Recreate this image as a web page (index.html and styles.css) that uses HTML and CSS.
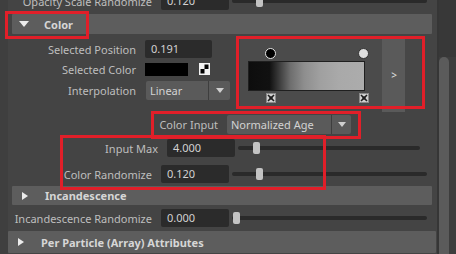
FILE: index.html
```html
<!DOCTYPE html>
<html>
<head>
<meta charset="utf-8">
<link rel="stylesheet" href="styles.css">
</head>
<body>
<div class="app">
  <div class="main">
    <div class="row row-top">
      <span class="lbl w152">Opacity Scale Randomize</span>
      <span class="field f68">0.120</span>
      <div class="slider s195"><span class="thumb" style="left:24px"></span></div>
    </div>

    <div class="frame-head sub"><span class="tri-down"></span><span class="head-text">Color</span></div>

    <div class="color-top">
      <div class="color-rows">
        <div class="row row-sp">
          <span class="lbl w136">Selected Position</span>
          <span class="field f67">0.191</span>
        </div>
        <div class="row row-sc">
          <span class="lbl w136">Selected Color</span>
          <span class="swatch"></span>
          <svg class="checker" width="11" height="12" viewBox="0 0 11 12"><rect x="0" y="0" width="11" height="12" fill="#f2f2f2"/><rect x="5.5" y="1.5" width="4" height="4.5" fill="#000"/><rect x="1.5" y="6" width="4" height="4.5" fill="#000"/></svg>
        </div>
        <div class="row row-ip">
          <span class="lbl w136">Interpolation</span>
          <div class="dropdown dd-interp">
            <span class="dd-text">Linear</span>
            <span class="dd-btn"><span class="dd-arrow"></span></span>
          </div>
        </div>
      </div>
      <div class="ramp">
        <div class="ramp-panel">
          <span class="marker m-black" style="left:25px"></span>
          <span class="marker m-white" style="left:118px"></span>
          <div class="ramp-grad"></div>
          <svg class="ramp-icon" style="left:26px" width="10" height="10" viewBox="0 0 10 10"><rect x="0.5" y="0.5" width="9" height="9" fill="#cfcfcf" stroke="#8a8a8a"/><path d="M2 2 L8 8 M8 2 L2 8" stroke="#1e1e1e" stroke-width="1.6"/><rect x="3.5" y="3.5" width="3" height="3" fill="#1e1e1e"/></svg>
          <svg class="ramp-icon" style="left:119px" width="10" height="10" viewBox="0 0 10 10"><rect x="0.5" y="0.5" width="9" height="9" fill="#cfcfcf" stroke="#8a8a8a"/><path d="M2 2 L8 8 M8 2 L2 8" stroke="#1e1e1e" stroke-width="1.6"/><rect x="3.5" y="3.5" width="3" height="3" fill="#1e1e1e"/></svg>
        </div>
        <div class="ramp-strip">&gt;</div>
        <div class="ramp-side"></div>
      </div>
    </div>

    <div class="row row-ci">
      <span class="lbl w218">Color Input</span>
      <div class="dropdown dd-input">
        <span class="dd-text">Normalized Age</span>
        <span class="dd-btn"><span class="dd-arrow"></span></span>
      </div>
    </div>

    <div class="row row-im">
      <span class="lbl w158">Input Max</span>
      <span class="field f68">4.000</span>
      <div class="slider s182"><span class="thumb" style="left:15px"></span></div>
    </div>

    <div class="row row-cr">
      <span class="lbl w152">Color Randomize</span>
      <span class="field f68">0.120</span>
      <div class="slider s195"><span class="thumb" style="left:24px"></span></div>
    </div>

    <div class="frame-head sub closed-a"><span class="tri-right"></span><span class="head-text">Incandescence</span></div>

    <div class="row row-ir">
      <span class="lbl w152">Incandescence Randomize</span>
      <span class="field f68">0.000</span>
      <div class="slider s195"><span class="thumb" style="left:1px"></span></div>
    </div>

    <div class="frame-head top closed-b"><span class="tri-right"></span><span class="head-text">Per Particle (Array) Attributes</span></div>
  </div>

  <div class="scrollbar">
    <div class="sb-top"></div>
    <div class="sb-thumb"></div>
  </div>

  <div class="mark mark-color"></div>
  <div class="mark mark-ramp"></div>
  <div class="mark mark-input"></div>
  <div class="mark mark-group"></div>
</div>
</body>
</html>
```

FILE: styles.css
```css
* { box-sizing: border-box; }
html, body {
  margin: 0;
  padding: 0;
  background: #444444;
  overflow: hidden;
}
body {
  font-family: "Noto Sans", "Open Sans", sans-serif;
  font-size: 11px;
  color: #bdbdbd;
}
.app {
  position: relative;
  width: 456px;
  height: 254px;
  display: flex;
  overflow: hidden;
}
.main {
  width: 437px;
  display: flex;
  flex-direction: column;
  background: linear-gradient(to right, #3f3f3f 0, #3f3f3f 8px, #444444 8px);
}
.row {
  display: flex;
  align-items: center;
  flex: none;
}
.lbl {
  flex: none;
  text-align: right;
  white-space: nowrap;
  color: #bebebe;
}
.w136 { width: 136px; }
.w152 { width: 152px; }
.w158 { width: 158px; }
.w218 { width: 218px; }

.field {
  flex: none;
  height: 18px;
  line-height: 18px;
  margin-left: 9px;
  padding-left: 6px;
  background: #2b2b2b;
  border-radius: 2px;
  color: #d2d2d2;
}
.f68 { width: 68px; }
.f67 { width: 67px; }

.slider {
  flex: none;
  position: relative;
  height: 14px;
  margin-left: 3px;
}
.slider::before {
  content: "";
  position: absolute;
  left: 0;
  right: 0;
  top: 5px;
  height: 4px;
  border-radius: 2px;
  background: #2a2a2a;
}
.s195 { width: 195px; }
.s182 { width: 182px; }
.thumb {
  position: absolute;
  top: 1px;
  width: 7px;
  height: 12px;
  border-radius: 2px;
  background: #c3c3c3;
}

.row-top { height: 18px; margin-top: -8px; }

.frame-head {
  flex: none;
  display: flex;
  align-items: center;
  background: #5d5d5d;
  border-radius: 1px;
}
.frame-head.sub { margin-left: 12px; width: 420px; }
.frame-head.top { margin-left: 8px; width: 428px; }
.frame-head:nth-child(2) { height: 20px; margin-top: 4px; }
.head-text {
  font-weight: bold;
  color: #d6d6d6;
}
.tri-down {
  width: 0;
  height: 0;
  margin-left: 7px;
  margin-right: 15px;
  border-left: 5.5px solid transparent;
  border-right: 5.5px solid transparent;
  border-top: 6px solid #ececec;
}
.tri-right {
  width: 0;
  height: 0;
  margin-left: 10px;
  margin-right: 17px;
  border-top: 4.5px solid transparent;
  border-bottom: 4.5px solid transparent;
  border-left: 6px solid #ececec;
}
.closed-a { height: 19px; margin-top: 3px; }
.closed-b { height: 22px; margin-top: 4px; }
.closed-b .tri-right { margin-left: 10px; margin-right: 17px; }

.color-top {
  flex: none;
  display: flex;
  align-items: flex-start;
  height: 78px;
}
.color-rows {
  width: 240px;
  flex: none;
  display: flex;
  flex-direction: column;
}
.row-sp { height: 18px; margin-top: 6px; }
.row-sc { height: 18px; margin-top: 2px; }
.row-ip { height: 19px; margin-top: 3px; }

.swatch {
  flex: none;
  width: 43px;
  height: 13px;
  margin-left: 9px;
  background: #000;
}
.checker {
  flex: none;
  margin-left: 11px;
  display: block;
}

.dropdown {
  flex: none;
  display: flex;
  height: 19px;
  background: #5a5a5a;
  border-radius: 2px;
  color: #d2d2d2;
}
.dd-text {
  flex: none;
  line-height: 19px;
  padding-left: 4px;
  border-right: 1px solid #3e3e3e;
}
.dd-btn {
  flex: none;
  display: flex;
  align-items: center;
  justify-content: center;
}
.dd-arrow {
  width: 0;
  height: 0;
  border-left: 4.5px solid transparent;
  border-right: 4.5px solid transparent;
  border-top: 5px solid #cfcfcf;
}
.dd-interp { margin-left: 10px; }
.dd-interp .dd-text { width: 63px; }
.dd-interp .dd-btn { width: 21px; }
.dd-input { margin-left: 9px; }
.dd-input .dd-text { width: 105px; }
.dd-input .dd-btn { width: 19px; }

.ramp {
  flex: none;
  display: flex;
  align-items: flex-start;
  margin-top: 3px;
}
.ramp-panel {
  position: relative;
  width: 142px;
  height: 71px;
  background: #4b4b4b;
}
.ramp-grad {
  position: absolute;
  left: 8px;
  top: 24px;
  width: 117px;
  height: 30px;
  border: 1px solid #1f1f1f;
  background: linear-gradient(to right, #0d0d0d 0%, #111 18%, #3a3a3a 26%, #6e6e6e 36%, #8e8e8e 48%, #a0a0a0 62%, #a9a9a9 78%, #acacac 100%);
}
.marker {
  position: absolute;
  top: 11px;
  width: 11px;
  height: 11px;
  border-radius: 50%;
}
.m-black { background: #000; border: 1.5px solid #e6e6e6; }
.m-white { background: #dedede; border: 1.5px solid #333; }
.ramp-icon {
  position: absolute;
  top: 56px;
  display: block;
}
.ramp-strip {
  width: 23px;
  height: 75px;
  background: #5a5a5a;
  color: #e0e0e0;
  font-size: 10px;
  display: flex;
  align-items: center;
  justify-content: center;
  padding-left: 1px;
}
.ramp-side {
  width: 16px;
  height: 71px;
  background: #474747;
}

.row-ci { height: 19px; margin-top: 3px; }
.row-im { height: 18px; margin-top: 5px; }
.row-cr { height: 18px; margin-top: 8px; }
.row-ir { height: 18px; margin-top: 4px; }

.scrollbar {
  width: 19px;
  flex: none;
  display: flex;
  flex-direction: column;
  background: #3d3d3d;
  border-left: 2px solid #363636;
}
.sb-top {
  height: 57px;
  flex: none;
  background: #383838;
}
.sb-thumb {
  flex: 1;
  width: 10px;
  margin-left: 0;
  background: #5b5b5b;
  border-radius: 5px 5px 0 0;
}

.mark {
  position: absolute;
  border: 3px solid #e11f29;
  pointer-events: none;
}
.mark-color { left: 5px; top: 11px; width: 84px; height: 28px; }
.mark-ramp { left: 236px; top: 36px; width: 189px; height: 73px; }
.mark-input { left: 151px; top: 111px; width: 210px; height: 28px; }
.mark-group { left: 60px; top: 135px; width: 266px; height: 55px; }
```
